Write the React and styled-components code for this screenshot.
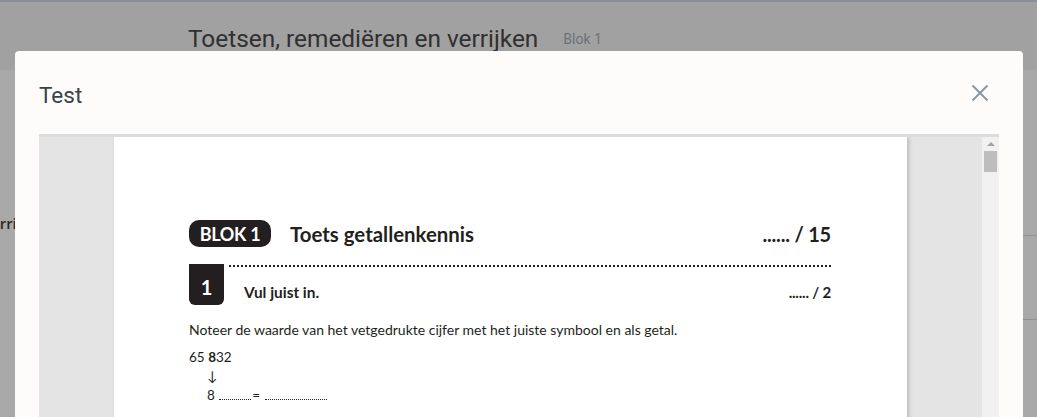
import styled, { createGlobalStyle } from "styled-components";

const Global = createGlobalStyle`
  html, body {
    margin: 0;
    padding: 0;
    width: 1037px;
    height: 417px;
    overflow: hidden;
    background: #ffffff;
  }
  * { box-sizing: border-box; }
`;

/* pagina achter de modal */

const SPage = styled.div`
  position: relative;
  width: 1037px;
  height: 417px;
  overflow: hidden;
  font-family: "Open Sans", "Liberation Sans", sans-serif;
`;

const SHeader = styled.header`
  height: 70px;
  border-top: 2px solid #d1d9e3;
  background: #f5f5f5;
  display: flex;
  align-items: center;
  padding-left: 188px;
  gap: 25px;
`;

const SHeaderTitle = styled.h1`
  margin: 0;
  font-family: Roboto, "Open Sans", sans-serif;
  font-weight: 400;
  font-size: 24.4px;
  color: #4a4a4a;
  padding-top: 4px;
`;

const SHeaderSub = styled.span`
  font-family: Roboto, sans-serif;
  font-size: 14px;
  color: #a5adb6;
  padding-top: 6px;
`;

const SBody = styled.div`
  display: grid;
  grid-template-columns: 240px 1fr;
`;

const SSide = styled.aside`
  height: 166px;
  display: flex;
  align-items: flex-end;
  padding-bottom: 3px;
  overflow: hidden;
`;

const SSideText = styled.span`
  margin-left: -17px;
  font-family: "Open Sans", sans-serif;
  font-weight: 600;
  font-size: 15px;
  color: #3f3f3f;
  white-space: nowrap;
`;

const SContent = styled.div`
  display: flex;
  flex-direction: column;
`;

const SRow = styled.div`
  height: ${(p) => p.h}px;
  border-bottom: 1px solid #d7dce3;
`;

const SOverlay = styled.div`
  position: absolute;
  inset: 0;
  background: rgba(0, 0, 0, 0.34);
`;

/* modal */

const SModal = styled.div`
  position: absolute;
  left: 15px;
  top: 51px;
  width: 1008px;
  height: 420px;
  background: #fdfcfb;
  border-radius: 4px;
  display: flex;
  flex-direction: column;
`;

const SModalHead = styled.div`
  height: 83px;
  display: flex;
  align-items: center;
  justify-content: space-between;
  padding: 0 34px 0 24px;
`;

const STitle = styled.h2`
  margin: 0;
  font-family: Roboto, sans-serif;
  font-weight: 400;
  font-size: 22.5px;
  color: #3b4148;
  padding-top: 4px;
`;

const SClose = styled.button`
  border: 0;
  background: none;
  padding: 0;
  width: 18px;
  height: 18px;
  display: flex;
  cursor: pointer;
`;

const SViewer = styled.div`
  margin: 0 24px;
  flex: 1;
  display: grid;
  grid-template-columns: 1fr 17px;
  background: #e4e4e4;
  border-top: 3px solid #dcdcdc;
`;

const SPages = styled.div`
  display: flex;
  justify-content: center;
  overflow: hidden;
`;

const SPdfPage = styled.div`
  width: 793px;
  background: #ffffff;
  box-shadow: 2px 0 4px rgba(0, 0, 0, 0.18);
  padding: 83px 76px 0 75px;
  font-family: Lato, "Open Sans", sans-serif;
  color: #231f20;
`;

const SScrollbar = styled.div`
  background: #f1f1f1;
  display: flex;
  flex-direction: column;
  align-items: center;
  padding-top: 5px;
  gap: 5px;
`;

const SArrow = styled.div`
  width: 0;
  height: 0;
  border-left: 4px solid transparent;
  border-right: 4px solid transparent;
  border-bottom: 4px solid #a3a3a3;
`;

const SThumb = styled.div`
  width: 13px;
  height: 21px;
  background: #bdbdbd;
`;

/* inhoud van de toets */

const SBlokRow = styled.div`
  display: flex;
  align-items: center;
  height: 27px;
`;

const SPill = styled.span`
  background: #231f20;
  color: #ffffff;
  border-radius: 10px;
  height: 27px;
  width: 82px;
  display: flex;
  align-items: center;
  justify-content: center;
  font-weight: 700;
  font-size: 18px;
  letter-spacing: -0.3px;
`;

const SBlokTitle = styled.span`
  margin-left: 19px;
  font-weight: 700;
  font-size: 20.4px;
  flex: 1;
`;

const SScore = styled.span`
  font-weight: 700;
  font-size: ${(p) => p.size}px;
  letter-spacing: -0.2px;
`;

const SQuestion = styled.div`
  margin-top: 17px;
  display: flex;
  align-items: flex-end;
`;

const SNumber = styled.span`
  width: 35px;
  height: 41px;
  background: #231f20;
  color: #ffffff;
  border-radius: 0 0 6px 6px;
  display: flex;
  align-items: flex-end;
  justify-content: center;
  padding-bottom: 6px;
  font-weight: 700;
  font-size: 20px;
`;

const SQuestionMain = styled.div`
  flex: 1;
  align-self: stretch;
  display: flex;
  flex-direction: column;
`;

const SDots = styled.div`
  height: 2px;
  margin: 1px 0 0 4px;
  background-image: radial-gradient(circle, #231f20 0.9px, transparent 1.1px);
  background-size: 4px 2px;
`;

const SQuestionLine = styled.div`
  flex: 1;
  display: flex;
  align-items: flex-end;
  justify-content: space-between;
  padding: 0 0 4px 20px;
`;

const SQuestionText = styled.span`
  font-weight: 700;
  font-size: 15.4px;
`;

const SInstruction = styled.p`
  margin: 16px 0 0;
  font-size: 14px;
`;

const SExercise = styled.div`
  margin-top: 10px;
  font-size: 13.5px;
  line-height: 19px;
  display: flex;
  flex-direction: column;
`;

const SIndent = styled.span`
  padding-left: 18px;
  white-space: nowrap;
`;

const SBlank = styled.span`
  display: inline-block;
  width: ${(p) => p.w}px;
  border-bottom: 1px dotted #231f20;
  margin: 0 1px;
`;

function CloseIcon() {
  return (
    <svg width="18" height="18" viewBox="0 0 18 18" fill="none">
      <path d="M1.5 1.5 L16.5 16.5 M16.5 1.5 L1.5 16.5" stroke="#8a97a3" strokeWidth="2" />
    </svg>
  );
}

export default function App() {
  return (
    <>
      <Global />
      <SPage>
        <SHeader>
          <SHeaderTitle>Toetsen, remediëren en verrijken</SHeaderTitle>
          <SHeaderSub>Blok 1</SHeaderSub>
        </SHeader>
        <SBody>
          <SSide>
            <SSideText>verrijken</SSideText>
          </SSide>
          <SContent>
            <SRow h={166} />
            <SRow h={84} />
          </SContent>
        </SBody>
        <SOverlay />
        <SModal>
          <SModalHead>
            <STitle>Test</STitle>
            <SClose aria-label="Sluiten">
              <CloseIcon />
            </SClose>
          </SModalHead>
          <SViewer>
            <SPages>
              <SPdfPage>
                <SBlokRow>
                  <SPill>BLOK 1</SPill>
                  <SBlokTitle>Toets getallenkennis</SBlokTitle>
                  <SScore size={20}>...... / 15</SScore>
                </SBlokRow>
                <SQuestion>
                  <SNumber>1</SNumber>
                  <SQuestionMain>
                    <SDots />
                    <SQuestionLine>
                      <SQuestionText>Vul juist in.</SQuestionText>
                      <SScore size={15}>...... / 2</SScore>
                    </SQuestionLine>
                  </SQuestionMain>
                </SQuestion>
                <SInstruction>
                  Noteer de waarde van het vetgedrukte cijfer met het juiste symbool en als getal.
                </SInstruction>
                <SExercise>
                  <span>
                    65 <b>8</b>32
                  </span>
                  <SIndent>↓</SIndent>
                  <SIndent>
                    8{" "}
                    <SBlank w={32} />={" "}
                    <SBlank w={62} />
                  </SIndent>
                </SExercise>
              </SPdfPage>
            </SPages>
            <SScrollbar>
              <SArrow />
              <SThumb />
            </SScrollbar>
          </SViewer>
        </SModal>
      </SPage>
    </>
  );
}
